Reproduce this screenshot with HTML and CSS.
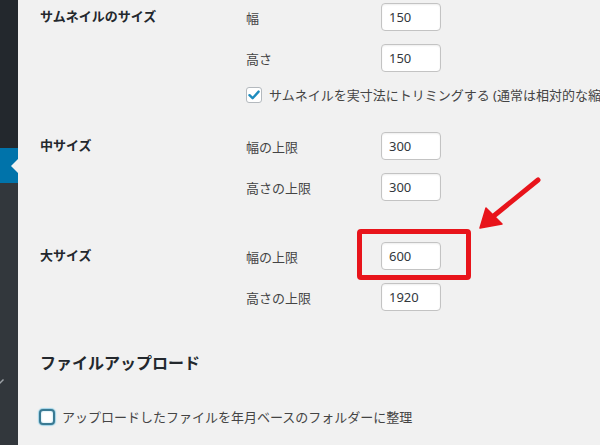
FILE: index.html
```html
<!DOCTYPE html>
<html lang="ja">
<head>
<meta charset="utf-8">
<title>メディア設定</title>
<link rel="stylesheet" href="styles.css">
</head>
<body>
<div class="page">
  <nav class="sidebar">
    <div class="sidebar-top"></div>
    <div class="sidebar-active"><span class="current-arrow"></span></div>
    <div class="sidebar-bottom">
      <svg class="menu-icon" width="6" height="8" viewBox="0 0 6 8"><path d="M0 6 L4 2 L5 3 L1 7 Z" fill="#9ea3a8"/></svg>
    </div>
  </nav>
  <main class="content">
    <section class="setting-row setting-row--thumb">
      <h3 class="setting-title">サムネイルのサイズ</h3>
      <div class="setting-fields">
        <div class="field"><span class="field-label">幅</span><span class="text-input">150</span></div>
        <div class="field"><span class="field-label">高さ</span><span class="text-input">150</span></div>
        <div class="check-row">
          <span class="checkbox checkbox--checked">
            <svg width="12" height="10" viewBox="0 0 12 10"><path d="M1.5 5.2 L4.6 8.2 L10.6 1.6" fill="none" stroke="#1e8cbe" stroke-width="2.4" stroke-linecap="round" stroke-linejoin="round"/></svg>
          </span>
          <span class="check-label">サムネイルを実寸法にトリミングする (通常は相対的な縮小によってサムネイルを作ります)</span>
        </div>
      </div>
    </section>
    <section class="setting-row">
      <h3 class="setting-title">中サイズ</h3>
      <div class="setting-fields">
        <div class="field"><span class="field-label">幅の上限</span><span class="text-input">300</span></div>
        <div class="field"><span class="field-label">高さの上限</span><span class="text-input">300</span></div>
      </div>
    </section>
    <section class="setting-row setting-row--large">
      <h3 class="setting-title">大サイズ</h3>
      <div class="setting-fields">
        <div class="field"><span class="field-label">幅の上限</span><span class="text-input">600</span></div>
        <div class="field"><span class="field-label">高さの上限</span><span class="text-input">1920</span></div>
      </div>
    </section>
    <h2 class="section-heading">ファイルアップロード</h2>
    <div class="check-row check-row--upload">
      <span class="checkbox checkbox--focus"></span>
      <span class="check-label">アップロードしたファイルを年月ベースのフォルダーに整理</span>
    </div>
  </main>
  <svg class="annotation" width="600" height="445" viewBox="0 0 600 445">
    <rect x="359.5" y="231.5" width="109" height="46" rx="1.5" fill="none" stroke="#e8141b" stroke-width="5"/>
    <line x1="538" y1="180" x2="490" y2="219" stroke="#e8141b" stroke-width="5" stroke-linecap="round"/>
    <polygon points="480,228 486,208 502,224" fill="#e8141b" stroke="#e8141b" stroke-width="1.5" stroke-linejoin="round"/>
  </svg>
</div>
</body>
</html>
```

FILE: styles.css
```css
html, body {
  margin: 0;
  padding: 0;
}

body {
  background: #f1f1f1;
  font-family: "Noto Sans", "Noto Sans CJK JP", sans-serif;
  color: #444;
  overflow: hidden;
}

.page {
  position: relative;
  display: flex;
  width: 600px;
  height: 445px;
  overflow: hidden;
}

.sidebar {
  flex: 0 0 18px;
  display: flex;
  flex-direction: column;
}

.sidebar-top {
  height: 148px;
  background: #23282d;
}

.sidebar-active {
  position: relative;
  height: 35px;
  background: #0073aa;
}

.current-arrow {
  position: absolute;
  right: 0;
  top: 11px;
  width: 0;
  height: 0;
  border-top: 7px solid transparent;
  border-bottom: 7px solid transparent;
  border-right: 7px solid #f1f1f1;
}

.sidebar-bottom {
  flex: 1;
  background: #32373c;
  padding-top: 194px;
}

.menu-icon {
  display: block;
  margin-left: -1px;
}

.content {
  flex: 1;
  padding: 3px 0 0 22px;
  min-width: 0;
}

.setting-row {
  display: grid;
  grid-template-columns: 206px 1fr;
  margin-bottom: 41px;
}

.setting-row--thumb {
  margin-bottom: 28px;
}

.setting-row--large {
  margin-bottom: 40px;
}

.setting-title {
  margin: 0;
  font-size: 13px;
  font-weight: 700;
  line-height: 26px;
  color: #23282d;
}

.setting-fields {
  display: flex;
  flex-direction: column;
  gap: 13px;
  min-width: 0;
}

.field {
  display: flex;
  align-items: center;
  height: 28px;
}

.field-label {
  flex: 0 0 135px;
  font-size: 13px;
  color: #444;
}

.text-input {
  box-sizing: border-box;
  width: 60px;
  height: 28px;
  padding: 0 7px;
  background: #fff;
  border: 1px solid #c3c3c3;
  border-radius: 4px;
  box-shadow: inset 0 1px 2px rgba(0, 0, 0, 0.07);
  font-size: 13px;
  line-height: 26px;
  color: #32373c;
}

.check-row {
  display: flex;
  align-items: center;
  gap: 7px;
  height: 19px;
  white-space: nowrap;
}

.check-label {
  font-size: 13px;
  color: #444;
}

.checkbox {
  box-sizing: border-box;
  flex: 0 0 16px;
  width: 16px;
  height: 16px;
  display: flex;
  align-items: center;
  justify-content: center;
  background: #fff;
  border: 1px solid #b4b9be;
  border-radius: 3px;
}

.checkbox--focus {
  border: 2px solid #3a7a93;
  border-radius: 4px;
  box-shadow: 0 0 1px 1px rgba(140, 205, 230, 0.8), inset 0 0 2px rgba(120, 195, 225, 0.7);
}

.section-heading {
  margin: 0 0 32px;
  font-size: 16px;
  font-weight: 700;
  line-height: 24px;
  color: #23282d;
}

.check-row--upload {
  margin-left: -1px;
}

.annotation {
  position: absolute;
  left: 0;
  top: 0;
  pointer-events: none;
}
```
